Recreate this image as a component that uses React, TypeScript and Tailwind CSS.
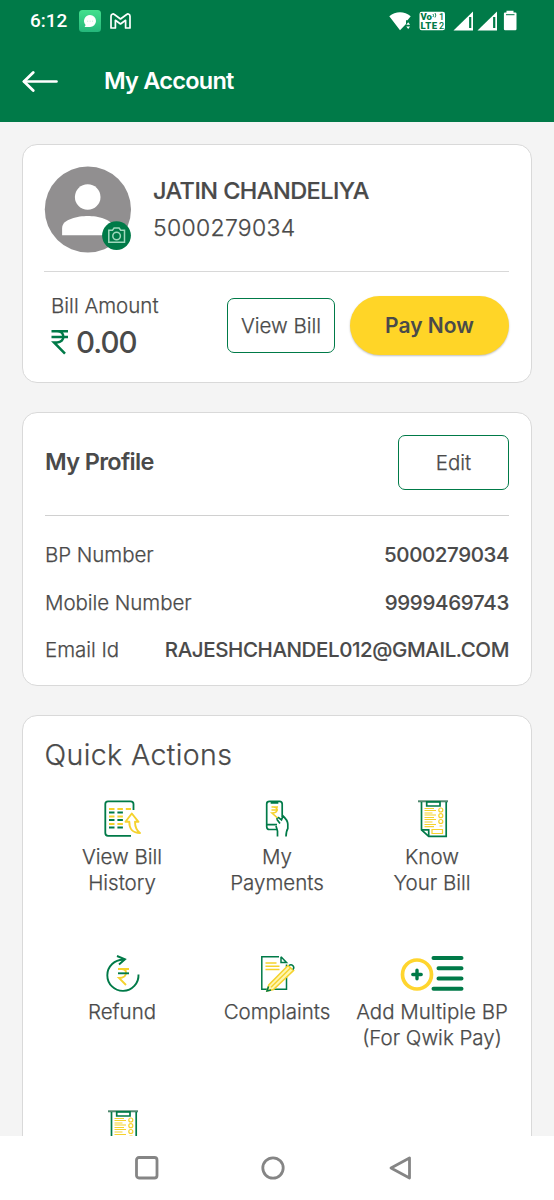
import type { ReactNode } from "react";

const GREEN = "#007a48";
const YELLOW = "#f5d22d";

function StatusBar() {
  return (
    <div className="flex h-[42px] items-center justify-between pl-[30px] pr-[37px]">
      <div className="flex items-center">
        <span className="w-[49px] font-['Roboto'] text-[19px] font-medium leading-6 text-white">6:12</span>
        <svg width="22" height="22" viewBox="0 0 22 22">
          <defs>
            <linearGradient id="chat" x1="0" y1="0" x2="0" y2="1">
              <stop offset="0" stopColor="#43e08d" />
              <stop offset="1" stopColor="#25b77b" />
            </linearGradient>
          </defs>
          <rect width="22" height="22" rx="3.5" fill="url(#chat)" />
          <path d="M11 5a6 6 0 1 1 0 12H5.6l1-2A6 6 0 0 1 11 5z" fill="#fff" />
          <path d="M8.5 11.2h.6m1.7 0h.6m1.7 0h.6" stroke="#8be6bd" strokeWidth="1" />
        </svg>
        <svg className="ml-[9px]" width="21" height="16" viewBox="0 0 21 16" fill="none">
          <path
            d="M1 3.2C1 1.2 3 .4 4.4 1.5L10.5 6L16.6 1.5C18 .4 20 1.2 20 3.2V15H15.6V7.3L10.5 11L5.4 7.3V15H1Z"
            stroke="#fff"
            strokeWidth="1.7"
            strokeLinejoin="round"
          />
        </svg>
      </div>
      <svg width="129" height="22" viewBox="0 0 129 22" fill="#fff">
        {/* wifi */}
        <path d="M1.3 6.2C7.5 1 16.5 1 22.7 6.2L19.5 10.2H18V14L12 20.2Z" />
        <path d="M18.3 14.8L20.2 12.3L22.1 14.8ZM18.3 16.4L20.2 18.9L22.1 16.4Z" />
        {/* volte */}
        <rect x="31.5" y="1.8" width="25.5" height="18.4" rx="2.2" />
        <g fill={GREEN} fontFamily="Roboto, sans-serif">
          <text x="32.5" y="10" fontSize="9.5" fontWeight="900">Vo</text>
          <text x="32.5" y="18.7" fontSize="9.5" fontWeight="900" textLength="16.5">LTE</text>
          <text x="51" y="9.8" fontSize="9" fontWeight="500">1</text>
          <text x="51" y="18.7" fontSize="9" fontWeight="500">2</text>
        </g>
        <path d="M45 4q1 1.500 0 3M47 3q1.600 2 0 4.500" stroke={GREEN} strokeWidth=".9" fill="none" />
        {/* sim signals */}
        <path d="M85 1.5V20.5H65.5Z" />
        <path d="M109 1.5V20.5H89.5Z" />
        <path d="M82.2 7V18M106.2 7V18" stroke={GREEN} strokeWidth="2.2" />
        {/* battery */}
        <path d="M118.500 .8h7v1.600h2q1 0 1 1V19q0 1.200-1.200 1.200h-10.200q-1.200 0-1.200-1.200V3.400q0-1 1-1h1.600z" />
        <path d="M118 4.700h8.500" stroke={GREEN} strokeWidth="1" />
      </svg>
    </div>
  );
}

function Header() {
  return (
    <header className="h-[122px] shrink-0 bg-[#007a48]">
      <StatusBar />
      <div className="flex h-[78px] items-center pl-[22px]">
        <svg width="36" height="22" viewBox="0 0 36 22" fill="none" stroke="#fff" strokeLinecap="round" strokeLinejoin="round">
          <path d="M2 11.5H34.5" strokeWidth="2.6" />
          <path d="M11.2 2.5L2 11.5L11.2 20.5" strokeWidth="2.8" />
        </svg>
        <h1 className="ml-[46px] text-[23.5px] font-semibold tracking-[-0.75px] text-white">My Account</h1>
      </div>
    </header>
  );
}

function Avatar() {
  return (
    <svg width="87" height="87" viewBox="0 0 87 87">
      <circle cx="43.9" cy="43.5" r="43.1" fill="#918f90" />
      <circle cx="43.7" cy="31" r="12.8" fill="#fff" />
      <path d="M18.1 69.3V62C18.1 53 34.4 50 43.8 50C53.4 50 69 53 69 62V69.3Z" fill="#fff" />
      <circle cx="72.500" cy="69.600" r="14.400" fill={GREEN} />
      <g fill="none" stroke="#9fd8bd" strokeWidth="1.5">
        <path d="M64.800 64.300H68.500l1.600-2.200h5L76.700 64.300H80.500V76.300H64.800Z" />
        <circle cx="72.6" cy="70" r="3.8" />
      </g>
    </svg>
  );
}

function RupeeMark() {
  return (
    <svg width="18" height="26" viewBox="0 0 18 26" fill="none" stroke={GREEN} strokeWidth="2.5">
      <path d="M.5 2.2H17M.5 8H17M2 2.2H6C14.5 2.2 14.5 13.5 6 13.5H3L14 24.7" />
    </svg>
  );
}

function HistoryIcon() {
  return (
    <svg width="38" height="38" viewBox="0 0 38 38" fill="none">
      <path d="M27 35.8H4q-2.7 0-2.7-2.7V4Q1.3 1.3 4 1.3H26.5Q29.5 1.3 29.5 4V10" stroke={GREEN} strokeWidth="1.8" />
      <g strokeWidth="1.8" strokeDasharray="5.5 2.9">
        <path d="M5 9H27M5 16.5H19M5 24H19" stroke={YELLOW} />
        <path d="M5 12.5H19M5 20H19M5 27.5H19" stroke={GREEN} />
      </g>
      <path
        d="M27.8 13.5L21.5 21.8H25.3C25.3 27 26.5 32.8 36 33C32.5 30.5 31 27 31 21.8H34.5Z"
        stroke={YELLOW}
        strokeWidth="1.9"
        strokeLinejoin="round"
      />
    </svg>
  );
}

function PaymentsIcon() {
  return (
    <svg width="38" height="38" viewBox="0 0 38 38" fill="none" stroke={GREEN} strokeWidth="1.7">
      <path d="M18.5 29.5H10.5q-2.8 0-2.8-2.8V4Q7.7 1.3 10.5 1.3H20.5Q23.2 1.3 23.2 4V17M7.7 24.7H18M12.5 1.5v1.3h6V1.5" />
      <path d="M18.5 36.5V31L17 26M18 19.5L21 23.5M18.2 19.5Q17.3 17.5 19.5 17.5L22.5 19.8L24 16Q28.5 20 28.8 24V28.5Q27.2 31 27 36.5" />
      <path d="M12.5 7H19M12.5 10H19M13 7H14.5Q18 7 18 9.7Q18 13 13 13L18.5 18" stroke={YELLOW} strokeWidth="1.6" />
    </svg>
  );
}

function BillSheetIcon() {
  return (
    <svg width="38" height="38" viewBox="0 0 38 38" fill="none" stroke={GREEN} strokeWidth="1.7">
      <path d="M4 1.3H34" stroke="#50896f" strokeWidth="2" />
      <path d="M7.5 2V29.8L14.7 36.3H32.2V2" />
      <path d="M7.5 29.8H14.7V36.3M12.7 1.8H26V6H12.7Z" />
      <g stroke={YELLOW} strokeWidth="1.2">
        <path d="M10.5 8.5H20M10.5 10.5H22M10.5 13H18.5M10.5 15H22M10.5 17.5H20M10.5 19.5H22M10.5 22H18.5M10.5 24.5H22M10.5 26.7H20" />
        <circle cx="26.8" cy="10" r="2" />
        <circle cx="26.8" cy="15.7" r="2" />
        <circle cx="26.8" cy="21.5" r="2" />
        <path d="M18 29.5H28.5V33.5H18ZM25.5 26H28.5" />
      </g>
    </svg>
  );
}

function RefundIcon() {
  return (
    <svg width="38" height="38" viewBox="0 0 38 38" fill="none">
      <path d="M19.5 4.7A15.6 15.6 0 1 0 34.5 19.5" stroke={GREEN} strokeWidth="1.9" />
      <path d="M13 1L21 4.3L15 9.5" stroke={GREEN} strokeWidth="1.9" />
      <path d="M14 14H25M15 14H17.5Q22 14 22 17.5Q22 23 15 23L22 30" stroke={YELLOW} strokeWidth="1.9" />
      <path d="M14 18.3H25" stroke={GREEN} strokeWidth="1.9" />
    </svg>
  );
}

function ComplaintsIcon() {
  return (
    <svg width="38" height="38" viewBox="0 0 38 38" fill="none" stroke={GREEN} strokeWidth="1.5">
      <path d="M20 1.8H2.8V34.3H8M27.5 19V34.3H14M27.5 9.5V12M22 1.8V7.5H27.5L22 1.8" />
      <path d="M6.5 8H17.5M6.5 11.3H20.5M6.5 14.5H20.5" stroke={YELLOW} strokeWidth="1.4" />
      <path d="M8 36L9.8 30L29 10.5L34.5 15.5L14.5 34.5Z" fill="#fff6b0" stroke={YELLOW} strokeWidth="1.6" />
      <path d="M12 32.3L31.5 13" stroke={YELLOW} strokeWidth="1.4" />
      <path d="M30 10.5Q32 8.8 34 10.7Q35.6 12.7 34 14.5M9.5 31.5L8 36L12 35" />
    </svg>
  );
}

function AddMultipleIcon() {
  return (
    <svg width="66" height="38" viewBox="0 0 66 38" fill="none" strokeLinecap="round">
      <circle cx="17" cy="19.5" r="14.5" stroke="#ffd52e" strokeWidth="3.7" />
      <path d="M12.8 19.5H21.2M17 15.3V23.7" stroke={GREEN} strokeWidth="3.4" />
      <path d="M33.5 3H61.5M38.5 13.2H61.5M38.5 23.5H61.5M33.5 33.7H61.5" stroke={GREEN} strokeWidth="4" />
    </svg>
  );
}

function OutlineButton({ children, className }: { children: ReactNode; className: string }) {
  return (
    <button className={`flex h-[55px] items-center justify-center rounded-[7px] border-[1.5px] border-[#007a48] pt-px text-[20.5px] font-light [-webkit-text-stroke:0.25px] ${className}`}>
      {children}
    </button>
  );
}

const details = [
  { label: "BP Number", value: "5000279034", spacing: "tracking-[-0.4px]" },
  { label: "Mobile Number", value: "9999469743", spacing: "tracking-[-0.3px]" },
  { label: "Email Id", value: "RAJESHCHANDEL012@GMAIL.COM", spacing: "tracking-[-0.4px]" },
];

const actions = [
  { lines: ["View Bill", "History"], icon: <HistoryIcon /> },
  { lines: ["My", "Payments"], icon: <PaymentsIcon /> },
  { lines: ["Know", "Your Bill"], icon: <BillSheetIcon /> },
  { lines: ["Refund"], icon: <RefundIcon /> },
  { lines: ["Complaints"], icon: <ComplaintsIcon /> },
  { lines: ["Add Multiple BP", "(For Qwik Pay)"], icon: <AddMultipleIcon /> },
  { lines: [], icon: <BillSheetIcon /> },
];

function AccountCard() {
  return (
    <section className="h-[239px] rounded-[15px] border border-[#d9d9d9] bg-white pl-[21px] pr-[22px] pt-[21px]">
      <div className="flex h-[106px] border-b-[1.5px] border-[#d8d8d8]">
        <Avatar />
        <div className="ml-[22px] pt-[6px]">
          <div className="text-[23.5px] font-medium leading-[38px] tracking-[-0.55px] [-webkit-text-stroke:0.2px]">JATIN CHANDELIYA</div>
          <div className="text-[23px] font-light leading-[36px] tracking-[0.3px] [-webkit-text-stroke:0.25px]">5000279034</div>
        </div>
      </div>
      <div className="flex items-start pt-[24px]">
        <div className="w-[183px] pl-[7px]">
          <div className="text-[20.5px] font-light leading-[20px] [-webkit-text-stroke:0.25px]">Bill Amount</div>
          <div className="mt-[5px] flex items-center">
            <RupeeMark />
            <span className="ml-[7px] text-[29.5px] font-medium leading-[42px] tracking-[-1px]">0.00</span>
          </div>
        </div>
        <OutlineButton className="mt-[2px] w-[108px]">View Bill</OutlineButton>
        <button className="ml-[15px] h-[59px] w-[159px] rounded-full bg-[#ffd527] text-[21px] font-semibold shadow-[0_1px_2px_rgba(0,0,0,0.25)]">
          Pay Now
        </button>
      </div>
    </section>
  );
}

function ProfileCard() {
  return (
    <section className="mt-[29px] h-[274px] rounded-[15px] border border-[#d9d9d9] bg-white px-[22px] pt-[22px]">
      <div className="flex h-[81px] items-start justify-between border-b border-[#d0d0d0]">
        <h2 className="text-[23.5px] font-semibold leading-[54px] tracking-[-0.65px]">My Profile</h2>
        <OutlineButton className="w-[111px]">Edit</OutlineButton>
      </div>
      <dl className="pt-[16px]">
        {details.map((d) => (
          <div key={d.label} className="flex h-[47.25px] items-center justify-between">
            <dt className="text-[20.5px] font-light tracking-[-0.05px] [-webkit-text-stroke:0.25px]">{d.label}</dt>
            <dd className={`text-[20.5px] font-[550] [-webkit-text-stroke:0.1px] ${d.spacing}`}>{d.value}</dd>
          </div>
        ))}
      </dl>
    </section>
  );
}

function QuickActions() {
  return (
    <section className="mt-[29px] h-[600px] rounded-[15px] border border-[#d9d9d9] bg-white px-[21.5px] pt-[20px]">
      <h2 className="text-[28.5px] font-light leading-[37px] tracking-[0.4px] [-webkit-text-stroke:0.25px]">Quick Actions</h2>
      <div className="mt-[27px] grid grid-cols-3">
        {actions.map((a, i) => (
          <div key={i} className="flex h-[155px] flex-col items-center">
            <div className="pl-px">{a.icon}</div>
            <div className="mt-[6px] whitespace-nowrap text-center text-[20.5px] font-light leading-[26px] [-webkit-text-stroke:0.25px]">
              {a.lines.map((line) => (
                <div key={line}>{line}</div>
              ))}
            </div>
          </div>
        ))}
      </div>
    </section>
  );
}

function NavBar() {
  return (
    <nav className="flex h-[64px] shrink-0 items-center justify-between bg-white pl-[135px] pr-[141px]">
      <svg width="24" height="24" viewBox="0 0 24 24" fill="none" stroke="#858585" strokeWidth="2.8">
        <rect x="1.5" y="1.5" width="20.5" height="20.5" rx="2.5" />
      </svg>
      <svg className="mr-[2px]" width="24" height="24" viewBox="0 0 24 24" fill="none" stroke="#858585" strokeWidth="2.8">
        <circle cx="12" cy="12" r="10.2" />
      </svg>
      <svg width="24" height="24" viewBox="0 0 24 24" fill="none" stroke="#858585" strokeWidth="2.8" strokeLinejoin="round">
        <path d="M20.5 2V22L2 12Z" />
      </svg>
    </nav>
  );
}

export default function App() {
  return (
    <div className="flex h-[1200px] w-[554px] flex-col overflow-hidden bg-[#f4f4f4] font-['Inter',sans-serif] text-[#4a4a4a]">
      <Header />
      <main className="min-h-0 flex-1 overflow-hidden px-[22px] pt-[22px]">
        <AccountCard />
        <ProfileCard />
        <QuickActions />
      </main>
      <NavBar />
    </div>
  );
}
